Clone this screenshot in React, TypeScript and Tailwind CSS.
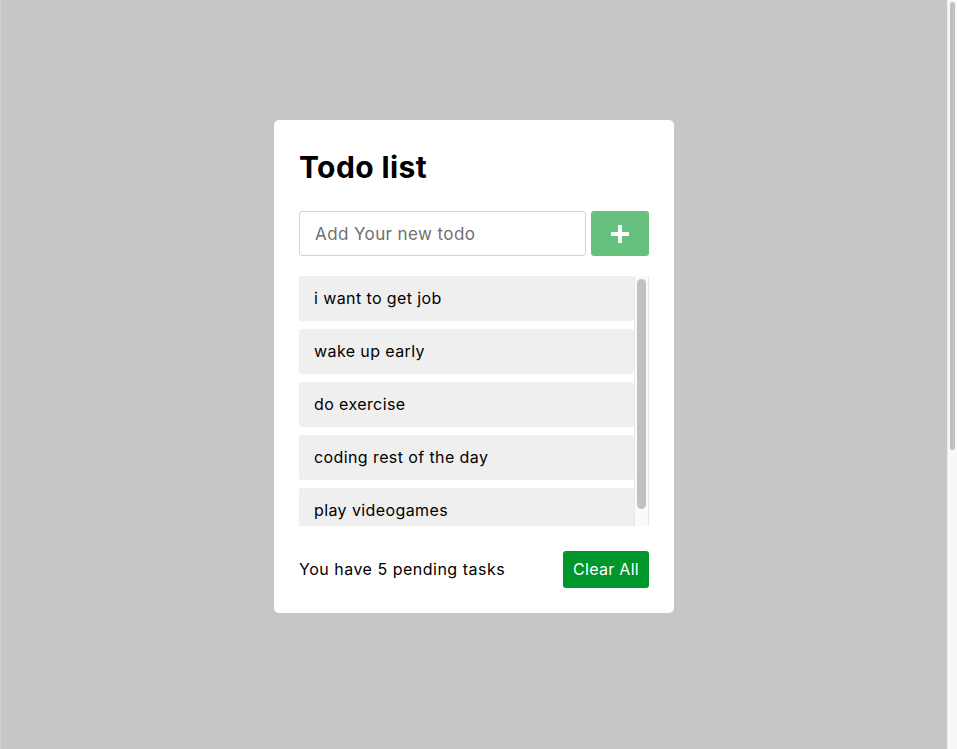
import { useState } from 'react';

const initialTodos = [
  'i want to get job',
  'wake up early',
  'do exercise',
  'coding rest of the day',
  'play videogames',
];

export default function App() {
  const [todos, setTodos] = useState<string[]>(initialTodos);
  const [text, setText] = useState('');

  const addTodo = () => {
    if (!text.trim()) return;
    setTodos([...todos, text.trim()]);
    setText('');
  };

  return (
    <div
      className="flex h-screen overflow-hidden bg-[#c6c6c6]"
      style={{ fontFamily: 'Inter, "Noto Sans", sans-serif' }}
    >
      {/* page */}
      <div className="flex flex-1 justify-center border-l border-[#d2d2d2] pt-[120px]">
        <div className="h-[493px] w-[400px] rounded-[5px] bg-white p-[25px]">
          <h1 className="mt-[3px] text-[30px] leading-[38px] font-bold tracking-[0.4px] text-black">Todo list</h1>

          <div className="mt-[25px] flex gap-[5px]">
            <input
              value={text}
              onChange={(e) => setText(e.target.value)}
              placeholder="Add Your new todo"
              className="h-[45px] w-[287px] rounded-[3px] border border-[#c4f064] px-[15px] text-[17px] tracking-[0.4px] text-black outline-none placeholder:text-[#707070]"
            />
            <button
              onClick={addTodo}
              className="flex h-[45px] w-[58px] items-center justify-center rounded-[3px] bg-[#66c07e]"
            >
              <svg width="20" height="20" viewBox="0 0 20 20" fill="none">
                <path d="M10 1v18M1 10h18" stroke="white" strokeWidth="4" />
              </svg>
            </button>
          </div>

          {/* list with its scrollbar */}
          <div className="mt-[20px] flex h-[250px]">
            <ul className="flex-1 overflow-hidden">
              {todos.map((todo, i) => (
                <li
                  key={i}
                  className="mb-[8px] flex h-[45px] items-center rounded-[3px] bg-[#efefef] px-[15px] pb-[2px] text-[16px] tracking-[0.4px] text-black"
                >
                  {todo}
                </li>
              ))}
            </ul>
            <div className="w-[15px] border-x border-[#e8e8e8] bg-[#fafafa] px-[2px] pt-[3px]">
              <div className="h-[230px] rounded-full bg-[#c1c1c1]" />
            </div>
          </div>

          <div className="mt-[25px] flex items-center justify-between">
            <span className="pb-[2px] text-[16px] tracking-[0.5px] text-black">You have {todos.length} pending tasks</span>
            <button
              onClick={() => setTodos([])}
              className="h-[37px] w-[86px] rounded-[3px] bg-[#00962b] pb-[1px] text-[16px] tracking-[0.3px] text-white"
            >
              Clear All
            </button>
          </div>
        </div>
      </div>

      {/* page scrollbar */}
      <div className="w-[10px] border-l border-[#ececec] bg-[#f8f8f8] px-[2px] pt-[2px]">
        <div className="h-[448px] rounded-full bg-[#c1c1c1]" />
      </div>
    </div>
  );
}
